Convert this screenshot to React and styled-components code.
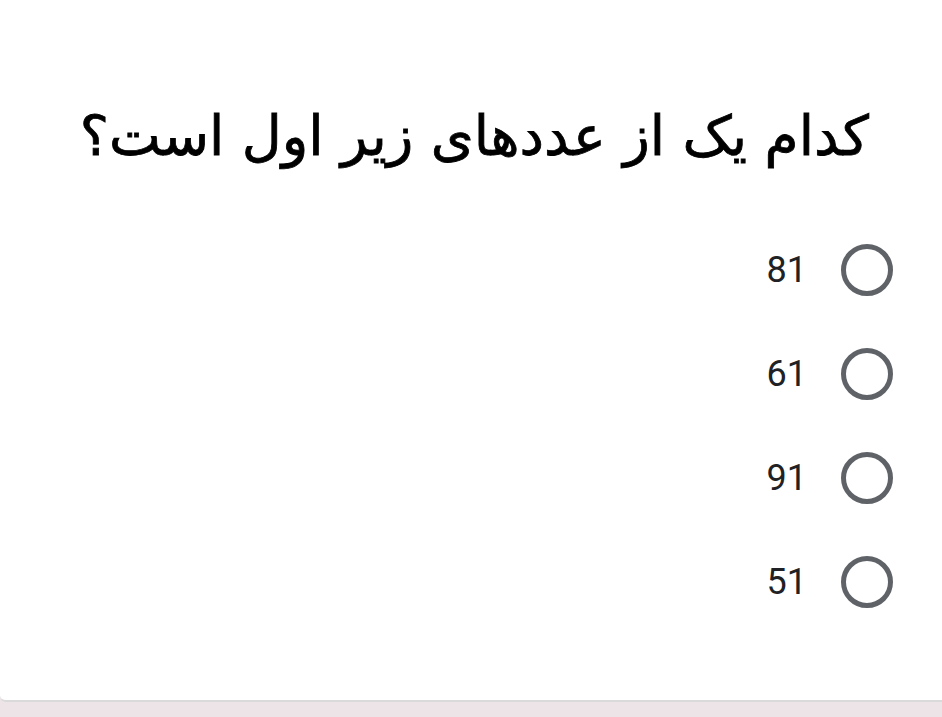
import React from "react";
import styled, { createGlobalStyle } from "styled-components";

const Global = createGlobalStyle`
  html, body {
    margin: 0;
    padding: 0;
    background: #ede4e8;
  }
`;

const Card = styled.div`
  direction: rtl;
  background: #ffffff;
  height: 702px;
  box-sizing: border-box;
  border-bottom: 2px solid #dadada;
  border-bottom-left-radius: 6px;
  padding: 86px 49px 0 40px;
`;

const Title = styled.h1`
  margin: 0 24px 0 0;
  font-family: "DejaVu Sans", "Liberation Serif", serif;
  font-weight: 400;
  font-size: 55px;
  line-height: 100px;
  white-space: nowrap;
  color: #000;
  -webkit-text-stroke: 0.8px #000;
`;

const Options = styled.div`
  display: flex;
  flex-direction: column;
  gap: 52px;
  margin-top: 58px;
`;

const Option = styled.label`
  display: flex;
  align-items: center;
  gap: 34px;
  height: 52px;
`;

const Radio = styled.span`
  width: 52px;
  height: 52px;
  box-sizing: border-box;
  border: 5px solid #5f6368;
  border-radius: 50%;
  flex-shrink: 0;
`;

const Value = styled.span`
  font-family: Roboto, "Liberation Sans", sans-serif;
  font-size: 36px;
  color: #202124;
  direction: ltr;
`;

const values = ["81", "61", "91", "51"];

export default function App() {
  return (
    <>
      <Global />
      <Card>
        <Title>کدام یک از عددهای زیر اول است؟</Title>
        <Options>
          {values.map((v) => (
            <Option key={v}>
              <Radio />
              <Value>{v}</Value>
            </Option>
          ))}
        </Options>
      </Card>
    </>
  );
}
